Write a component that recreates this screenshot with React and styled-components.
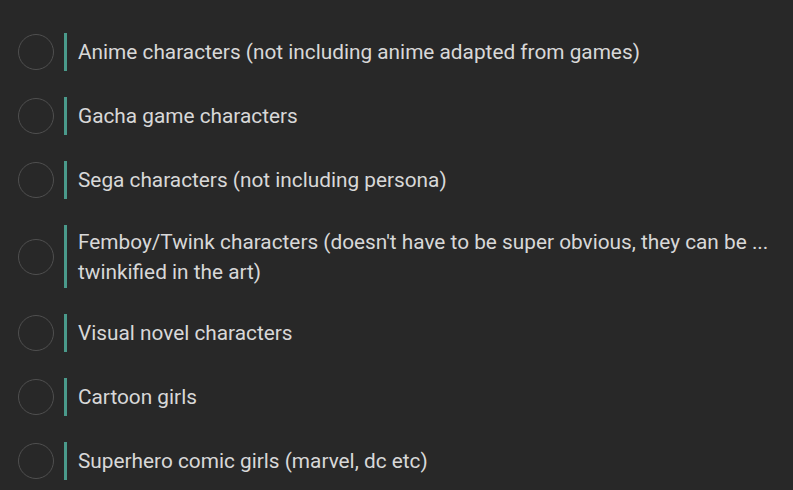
import React from "react";
import styled, { createGlobalStyle } from "styled-components";

const GlobalStyle = createGlobalStyle`
  html, body {
    margin: 0;
    padding: 0;
    background: #282828;
  }
  body {
    font-family: Roboto, "Liberation Sans", sans-serif;
  }
`;

const Page = styled.div`
  width: 793px;
  height: 490px;
  overflow: hidden;
  background: #282828;
  box-sizing: border-box;
  padding: 33px 0 0 18px;
`;

const List = styled.div`
  display: flex;
  flex-direction: column;
  gap: 26px;
`;

const Option = styled.div`
  display: flex;
  align-items: center;
`;

const Radio = styled.div`
  width: 34px;
  height: 34px;
  flex: 0 0 auto;
  border-radius: 50%;
  border: 1px solid #4f4f4f;
  box-sizing: content-box;
  margin-right: 10px;
`;

const Label = styled.div`
  display: flex;
  align-items: center;
  min-height: 38px;
  box-sizing: border-box;
  border-left: 3px solid #4a9a8b;
  padding: 1.5px 0 1.5px 11px;
  font-size: 20.8px;
  line-height: 30px;
  color: #d8d8d8;
`;

const options = [
  "Anime characters (not including anime adapted from games)",
  "Gacha game characters",
  "Sega characters (not including persona)",
  "Femboy/Twink characters (doesn't have to be super obvious, they can be ... twinkified in the art)",
  "Visual novel characters",
  "Cartoon girls",
  "Superhero comic girls (marvel, dc etc)",
];

export default function App() {
  return (
    <Page>
      <GlobalStyle />
      <List>
        {options.map((text) => (
          <Option key={text}>
            <Radio />
            <Label>{text}</Label>
          </Option>
        ))}
      </List>
    </Page>
  );
}
